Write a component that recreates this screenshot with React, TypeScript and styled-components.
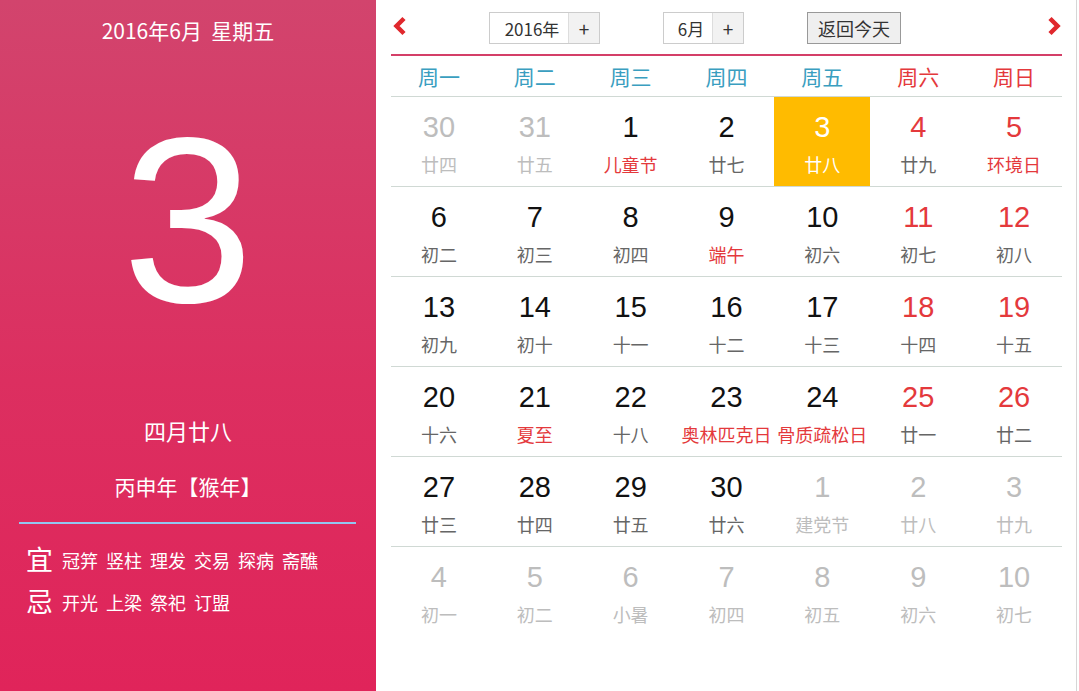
import React from 'react';
import styled, { createGlobalStyle } from 'styled-components';

const GlobalStyle = createGlobalStyle`
  html, body {
    margin: 0;
    padding: 0;
    background: #fff;
  }
  * {
    box-sizing: border-box;
  }
`;

const CJK = `"Noto Sans CJK SC", "Noto Sans", sans-serif`;
const NUM = `"Liberation Sans", "Noto Sans CJK SC", sans-serif`;

const RED = '#e4393c';
const TEAL = '#3a9ec0';
const GRID_LINE = '#d0d9d4';

const Page = styled.div`
  display: flex;
  width: 1079px;
  height: 691px;
  overflow: hidden;
`;

const SidePanel = styled.div`
  width: 376px;
  height: 100%;
  display: flex;
  flex-direction: column;
  align-items: center;
  background: linear-gradient(180deg, #d2446d 0%, #dc2f60 55%, #e0245a 100%);
  color: #fff;
  font-family: ${CJK};
`;

const SideTitle = styled.div`
  margin-top: 18px;
  font-size: 21px;
  line-height: 24px;
  white-space: pre;
`;

const BigDay = styled.div`
  margin-top: 58px;
  height: 240px;
  font-family: ${NUM};
  font-size: 236px;
  line-height: 240px;
`;

const SideLine = styled.div<{ $gap: number; $size: number }>`
  margin-top: ${({ $gap }) => $gap}px;
  font-size: ${({ $size }) => $size}px;
  line-height: 24px;
`;

const Divider = styled.div`
  align-self: stretch;
  margin: 24px 20px 0 19px;
  height: 2px;
  background: #93c6f0;
`;

const Almanac = styled.div`
  align-self: stretch;
  margin-top: 17px;
  padding-left: 26px;
  display: flex;
  flex-direction: column;
  gap: 6px;
`;

const AlmanacRow = styled.div`
  display: flex;
  align-items: center;
  height: 36px;
  gap: 8px;
`;

const AlmanacMark = styled.span`
  font-size: 27px;
  line-height: 36px;
  margin-right: 1px;
`;

const AlmanacItem = styled.span`
  font-size: 18px;
  line-height: 36px;
  padding-top: 2px;
`;

const MainPanel = styled.div`
  width: 701px;
  height: 100%;
  padding: 0 14px 0 15px;
  border-right: 1px solid #d6d6d6;
  display: flex;
  flex-direction: column;
  background: #fff;
`;

const Header = styled.div`
  height: 56px;
  display: flex;
  align-items: center;
  padding: 0 1px 0 2px;
  border-bottom: 2px solid #d43f68;
`;

const ArrowButton = styled.button<{ $right?: boolean }>`
  width: 14px;
  height: 20px;
  padding: 0;
  border: none;
  background: none;
  cursor: pointer;
  margin-left: ${({ $right }) => ($right ? 'auto' : '0')};
  margin-top: -2px;
  display: flex;
`;

const Controls = styled.div`
  margin-left: 82px;
  display: flex;
  align-items: center;
  gap: 63px;
  margin-top: 2px;
`;

const Picker = styled.div`
  display: flex;
  height: 32px;
  border: 1px solid #cccccc;
  font-family: ${CJK};
  color: #333;
`;

const PickerValue = styled.div<{ $w: number }>`
  width: ${({ $w }) => $w}px;
  display: flex;
  align-items: center;
  justify-content: center;
  padding-left: 6px;
  font-size: 17px;
  background: #fff;
`;

const PickerPlus = styled.div`
  width: 31px;
  display: flex;
  align-items: center;
  justify-content: center;
  font-size: 19px;
  background: #f2f2f2;
  border-left: 1px solid #dddddd;
`;

const TodayButton = styled.button`
  width: 94px;
  height: 32px;
  padding: 0;
  border: 1px solid #999;
  background: #efefef;
  font-family: ${CJK};
  font-size: 18px;
  color: #333;
  cursor: pointer;
`;

const WeekRow = styled.div`
  display: grid;
  grid-template-columns: repeat(7, 1fr);
  height: 41px;
  border-bottom: 1px solid ${GRID_LINE};
`;

const WeekLabel = styled.div<{ $weekend: boolean }>`
  display: flex;
  align-items: center;
  justify-content: center;
  font-family: ${CJK};
  font-size: 21px;
  color: ${({ $weekend }) => ($weekend ? RED : TEAL)};
`;

const DayRow = styled.div<{ $last: boolean }>`
  display: grid;
  grid-template-columns: repeat(7, 1fr);
  height: 90px;
  border-bottom: ${({ $last }) => ($last ? 'none' : `1px solid ${GRID_LINE}`)};
`;

const DayCell = styled.div<{ $today: boolean }>`
  display: flex;
  flex-direction: column;
  align-items: center;
  padding-top: 13px;
  background: ${({ $today }) => ($today ? '#ffbb00' : 'transparent')};
`;

const DayNum = styled.div<{ $color: string }>`
  font-family: ${NUM};
  font-size: 29px;
  line-height: 34px;
  color: ${({ $color }) => $color};
`;

const DayLunar = styled.div<{ $color: string }>`
  margin-top: 9px;
  font-family: ${CJK};
  font-size: 18px;
  line-height: 22px;
  white-space: nowrap;
  color: ${({ $color }) => $color};
`;

const Chevron: React.FC<{ right?: boolean }> = ({ right }) => (
  <svg width="14" height="20" viewBox="0 0 14 20">
    <polyline
      points={right ? '3,2.5 10.5,10 3,17.5' : '11,2.5 3.5,10 11,17.5'}
      fill="none"
      stroke="#e0282d"
      strokeWidth="4.5"
      strokeLinejoin="miter"
    />
  </svg>
);

type Day = {
  n: number;
  lunar: string;
  other?: boolean;
  fest?: boolean;
  today?: boolean;
};

const weeks: Day[][] = [
  [
    { n: 30, lunar: '廿四', other: true },
    { n: 31, lunar: '廿五', other: true },
    { n: 1, lunar: '儿童节', fest: true },
    { n: 2, lunar: '廿七' },
    { n: 3, lunar: '廿八', today: true },
    { n: 4, lunar: '廿九' },
    { n: 5, lunar: '环境日', fest: true },
  ],
  [
    { n: 6, lunar: '初二' },
    { n: 7, lunar: '初三' },
    { n: 8, lunar: '初四' },
    { n: 9, lunar: '端午', fest: true },
    { n: 10, lunar: '初六' },
    { n: 11, lunar: '初七' },
    { n: 12, lunar: '初八' },
  ],
  [
    { n: 13, lunar: '初九' },
    { n: 14, lunar: '初十' },
    { n: 15, lunar: '十一' },
    { n: 16, lunar: '十二' },
    { n: 17, lunar: '十三' },
    { n: 18, lunar: '十四' },
    { n: 19, lunar: '十五' },
  ],
  [
    { n: 20, lunar: '十六' },
    { n: 21, lunar: '夏至', fest: true },
    { n: 22, lunar: '十八' },
    { n: 23, lunar: '奥林匹克日', fest: true },
    { n: 24, lunar: '骨质疏松日', fest: true },
    { n: 25, lunar: '廿一' },
    { n: 26, lunar: '廿二' },
  ],
  [
    { n: 27, lunar: '廿三' },
    { n: 28, lunar: '廿四' },
    { n: 29, lunar: '廿五' },
    { n: 30, lunar: '廿六' },
    { n: 1, lunar: '建党节', other: true },
    { n: 2, lunar: '廿八', other: true },
    { n: 3, lunar: '廿九', other: true },
  ],
  [
    { n: 4, lunar: '初一', other: true },
    { n: 5, lunar: '初二', other: true },
    { n: 6, lunar: '小暑', other: true },
    { n: 7, lunar: '初四', other: true },
    { n: 8, lunar: '初五', other: true },
    { n: 9, lunar: '初六', other: true },
    { n: 10, lunar: '初七', other: true },
  ],
];

const weekNames = ['周一', '周二', '周三', '周四', '周五', '周六', '周日'];

const numColor = (d: Day, col: number) => {
  if (d.today) return '#fff';
  if (d.other) return '#bdbdbd';
  return col >= 5 ? RED : '#111';
};

const lunarColor = (d: Day) => {
  if (d.today) return '#fff';
  if (d.other) return '#bdbdbd';
  return d.fest ? RED : '#666';
};

const App: React.FC = () => (
  <>
    <GlobalStyle />
    <Page>
      <SidePanel>
        <SideTitle>2016年6月  星期五</SideTitle>
        <BigDay>3</BigDay>
        <SideLine $gap={78} $size={22}>
          四月廿八
        </SideLine>
        <SideLine $gap={32} $size={21}>
          丙申年【猴年】
        </SideLine>
        <Divider />
        <Almanac>
          <AlmanacRow>
            <AlmanacMark>宜</AlmanacMark>
            {['冠笄', '竖柱', '理发', '交易', '探病', '斋醮'].map((t) => (
              <AlmanacItem key={t}>{t}</AlmanacItem>
            ))}
          </AlmanacRow>
          <AlmanacRow>
            <AlmanacMark>忌</AlmanacMark>
            {['开光', '上梁', '祭祀', '订盟'].map((t) => (
              <AlmanacItem key={t}>{t}</AlmanacItem>
            ))}
          </AlmanacRow>
        </Almanac>
      </SidePanel>

      <MainPanel>
        <Header>
          <ArrowButton>
            <Chevron />
          </ArrowButton>
          <Controls>
            <Picker>
              <PickerValue $w={78}>2016年</PickerValue>
              <PickerPlus>+</PickerPlus>
            </Picker>
            <Picker>
              <PickerValue $w={48}>6月</PickerValue>
              <PickerPlus>+</PickerPlus>
            </Picker>
            <TodayButton>返回今天</TodayButton>
          </Controls>
          <ArrowButton $right>
            <Chevron right />
          </ArrowButton>
        </Header>

        <WeekRow>
          {weekNames.map((w, i) => (
            <WeekLabel key={w} $weekend={i >= 5}>
              {w}
            </WeekLabel>
          ))}
        </WeekRow>

        {weeks.map((row, r) => (
          <DayRow key={r} $last={r === weeks.length - 1}>
            {row.map((d, c) => (
              <DayCell key={c} $today={!!d.today}>
                <DayNum $color={numColor(d, c)}>{d.n}</DayNum>
                <DayLunar $color={lunarColor(d)}>{d.lunar}</DayLunar>
              </DayCell>
            ))}
          </DayRow>
        ))}
      </MainPanel>
    </Page>
  </>
);

export default App;
